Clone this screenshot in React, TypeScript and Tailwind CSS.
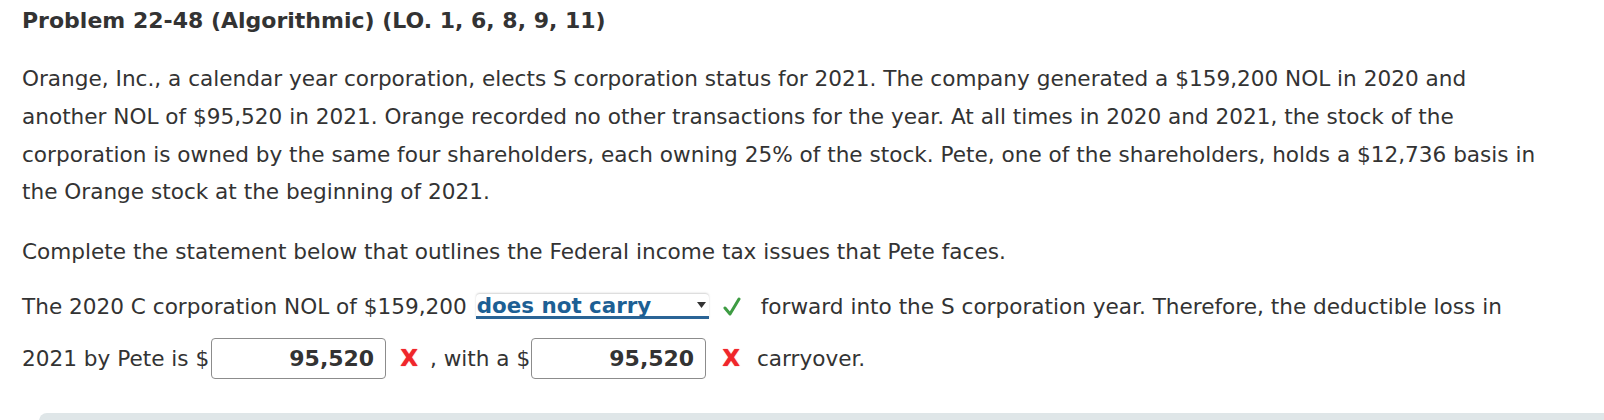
import React from "react";

function Check() {
  return (
    <svg width="18" height="20" viewBox="0 0 18 20" className="shrink-0">
      <path d="M2 11 L7 17 L16 2" fill="none" stroke="#3e9c43" strokeWidth="3" strokeLinecap="round" strokeLinejoin="round" />
    </svg>
  );
}

function Wrong() {
  return (
    <span className="font-bold text-[23px] leading-none text-[#f0262b] [text-shadow:0_0_1px_#f0262b]">
      X
    </span>
  );
}

function AmountBox({ value }: { value: string }) {
  return (
    <div className="flex h-[41px] w-[175px] shrink-0 items-center justify-end rounded-[4px] border border-[#8c8c8c] bg-white pr-[11px] text-[22px] font-bold text-[#333]">
      {value}
    </div>
  );
}

export default function App() {
  return (
    <div className="h-[420px] overflow-hidden bg-white font-['DejaVu_Sans',sans-serif] text-[#333]">
      <div className="pl-[22px] pr-[51px]">
        <h1 className="pt-[8px] text-[22px] font-bold leading-[25px]">
          Problem 22-48 (Algorithmic) (LO. 1, 6, 8, 9, 11)
        </h1>

        <p className="mt-[27px] text-[21.6px] leading-[37.8px]">
          Orange, Inc., a calendar year corporation, elects S corporation status for 2021. The company generated a
          $159,200 NOL in 2020 and another NOL of $95,520 in 2021. Orange recorded no other transactions for the year.
          At all times in 2020 and 2021, the stock of the corporation is owned by the same four shareholders, each
          owning 25% of the stock. Pete, one of the shareholders, holds a $12,736 basis in the Orange stock at the
          beginning of 2021.
        </p>

        <p className="mt-[21.5px] text-[21.6px] leading-[37.8px]">
          Complete the statement below that outlines the Federal income tax issues that Pete faces.
        </p>

        <div className="mt-[17.5px] flex h-[37.8px] items-center text-[21.6px] whitespace-nowrap">
          <span>The 2020 C corporation NOL of $159,200</span>
          <div className="ml-[9px] flex h-[25px] w-[233px] shrink-0 items-center justify-between rounded-t-[4px] border-b-[3px] border-[#2a6496] bg-white shadow-[0_-1px_2px_rgba(0,0,0,0.18)]">
            <span className="pl-[1px] text-[21.4px] font-bold leading-none text-[#1d5f94]">does not carry</span>
            <svg width="9" height="6" viewBox="0 0 9 6" className="mr-[3px]">
              <path d="M0 0 H9 L4.5 6 Z" fill="#333" />
            </svg>
          </div>
          <span className="ml-[14px]">
            <Check />
          </span>
          <span className="ml-[20px]">forward into the S corporation year. Therefore, the deductible loss in</span>
        </div>

        <div className="mt-[12.5px] flex h-[41px] items-center text-[21.6px] whitespace-nowrap">
          <span>2021 by Pete is $</span>
          <div className="ml-[2px]">
            <AmountBox value="95,520" />
          </div>
          <span className="ml-[14px]">
            <Wrong />
          </span>
          <span className="ml-[12px]">, with a $</span>
          <div className="ml-[1px]">
            <AmountBox value="95,520" />
          </div>
          <span className="ml-[16px]">
            <Wrong />
          </span>
          <span className="ml-[17px]">carryover.</span>
        </div>
      </div>

      <div className="ml-[39px] mt-[34px] h-[20px] rounded-tl-[8px] bg-[#dfe6e8]" />
    </div>
  );
}
